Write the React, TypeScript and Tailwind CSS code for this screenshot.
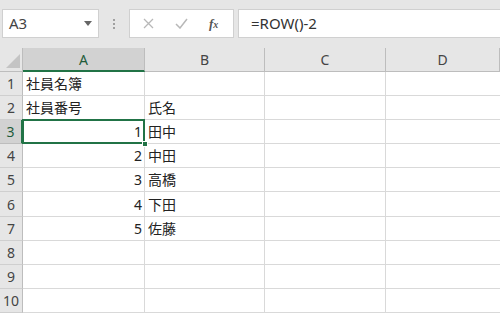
import React from "react";

const cols = [
  { key: "A", w: "w-[122px]" },
  { key: "B", w: "w-[120px]" },
  { key: "C", w: "w-[121px]" },
  { key: "D", w: "flex-1" },
];

const rows: { a?: string; aNum?: boolean; b?: string }[] = [
  { a: "社員名簿" },
  { a: "社員番号", b: "氏名" },
  { a: "1", aNum: true, b: "田中" },
  { a: "2", aNum: true, b: "中田" },
  { a: "3", aNum: true, b: "高橋" },
  { a: "4", aNum: true, b: "下田" },
  { a: "5", aNum: true, b: "佐藤" },
  {},
  {},
  {},
];

const font = { fontFamily: '"Noto Sans", "Noto Sans CJK JP", sans-serif' };

export default function App() {
  return (
    <div className="w-[500px] h-[313px] overflow-hidden bg-white flex flex-col text-[#222]" style={font}>
      {/* formula bar */}
      <div className="h-[48px] bg-[#e6e6e6] flex items-start pt-[9px] shrink-0">
        <div className="ml-[2px] w-[97px] h-[29px] bg-white border border-[#d0d0d0] flex items-center justify-between pl-[6px] pr-[6px]">
          <span className="text-[15px] text-[#444]">A3</span>
          <svg width="8" height="5" viewBox="0 0 8 5"><path d="M0 0h8L4 5z" fill="#666" /></svg>
        </div>
        <div className="w-[30px] h-[29px] flex flex-col items-center justify-center gap-[2px]">
          <span className="w-[2px] h-[2px] bg-[#a0a0a0]" />
          <span className="w-[2px] h-[2px] bg-[#a0a0a0]" />
          <span className="w-[2px] h-[2px] bg-[#a0a0a0]" />
        </div>
        <div className="w-[105px] h-[29px] bg-white border border-[#d0d0d0] flex items-center">
          <svg className="ml-[13px]" width="11" height="11" viewBox="0 0 11 11">
            <path d="M1 1l9 9M10 1l-9 9" stroke="#b8b8b8" strokeWidth="1.3" />
          </svg>
          <svg className="ml-[21px]" width="13" height="11" viewBox="0 0 13 11">
            <path d="M1 6l4 4 7-9" stroke="#b8b8b8" strokeWidth="1.5" fill="none" />
          </svg>
          <span className="ml-[21px] text-[13px] italic font-semibold text-[#555]" style={{ fontFamily: '"Liberation Serif", serif' }}>
            f<span className="text-[10px]">x</span>
          </span>
        </div>
        <div className="ml-[4px] flex-1 h-[29px] bg-white border border-[#d0d0d0] border-r-0 flex items-center pl-[12px]">
          <span className="text-[15px] text-[#333]">=ROW()-2</span>
        </div>
      </div>

      {/* column headers */}
      <div className="h-[24px] flex bg-[#e6e6e6] border-b border-[#bdbdbd] shrink-0">
        <div className="w-[23px] border-r border-[#bdbdbd] relative">
          <svg className="absolute right-[2px] bottom-[3px]" width="14" height="14" viewBox="0 0 14 14">
            <path d="M14 0V14H0z" fill="#c4c4c4" />
          </svg>
        </div>
        {cols.map((c) => (
          <div
            key={c.key}
            className={
              c.key === "A"
                ? `${c.w} bg-[#d2d2d2] border-r border-[#bdbdbd] border-b-2 border-b-[#217346] -mb-px flex items-center justify-center text-[14px] text-[#1f5c3a]`
                : `${c.w} border-r border-[#bdbdbd] flex items-center justify-center text-[14px] text-[#444]`
            }
          >
            {c.key}
          </div>
        ))}
      </div>

      {/* rows */}
      <div className="flex-1 flex flex-col">
        {rows.map((r, i) => {
          const sel = i === 2;
          return (
            <div key={i} className="h-[24.1px] flex shrink-0">
              <div
                className={
                  sel
                    ? "w-[23px] bg-[#d2d2d2] border-r-2 border-r-[#217346] border-b border-[#bdbdbd] flex items-center justify-center text-[14px] text-[#1f5c3a]"
                    : "w-[23px] bg-[#e6e6e6] border-r border-[#bdbdbd] border-b border-b-[#cfcfcf] flex items-center justify-center text-[14px] text-[#444]"
                }
              >
                {i + 1}
              </div>
              <div
                className={
                  "w-[122px] border-r border-b border-[#d9d9d9] flex items-center text-[14px] relative " +
                  (r.aNum ? "justify-end pr-[2px]" : "pl-[3px]")
                }
              >
                {sel && (
                  <>
                    <div className="absolute -left-px -top-px -right-px -bottom-px border-2 border-[#217346]" />
                    <div className="absolute -right-[4px] -bottom-[4px] w-[6px] h-[6px] bg-[#217346] border border-white z-10" />
                  </>
                )}
                {r.a}
              </div>
              <div className="w-[120px] border-r border-b border-[#d9d9d9] flex items-center pl-[3px] text-[14px]">
                {r.b}
              </div>
              <div className="w-[121px] border-r border-b border-[#d9d9d9]" />
              <div className="flex-1 border-b border-[#d9d9d9]" />
            </div>
          );
        })}
      </div>
    </div>
  );
}
